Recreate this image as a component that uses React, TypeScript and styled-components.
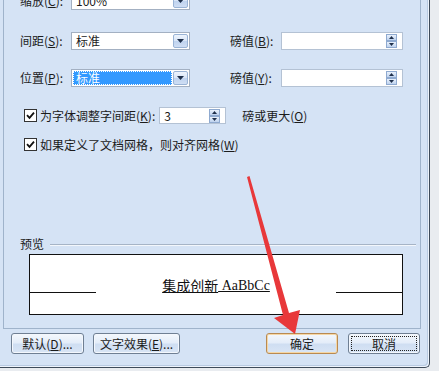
import React from 'react';
import styled, { createGlobalStyle } from 'styled-components';

const Global = createGlobalStyle`
  html, body { margin: 0; padding: 0; background: #E9ECF0; }
  body {
    font-family: "Noto Sans CJK SC", "Noto Sans", sans-serif;
    font-size: 12px;
    color: #1b1b1b;
    overflow: hidden;
  }
  u { text-underline-offset: 1px; }
`;

const Page = styled.div`
  position: relative;
  width: 439px;
  height: 371px;
  overflow: hidden;
  background: #E9ECF0;
`;

const Dialog = styled.div`
  width: 430px;
  height: 368px;
  box-sizing: border-box;
  background: #D5E3F5;
  border-right: 1px solid #3E4B5A;
  border-bottom: 1px solid #3E4B5A;
  border-bottom-right-radius: 5px;
  box-shadow: inset -1px -1px 0 #EEF4FC, inset -2px -2px 0 #B9CBE2;
  padding: 0 8px 0 3px;
  display: flex;
  flex-direction: column;
`;

const TabPanel = styled.div`
  margin-top: -40px;
  height: 369px;
  box-sizing: border-box;
  border: 1px solid #9FB3CB;
  display: flex;
  flex-direction: column;
  padding: 31px 0 13px 16px;
`;

const FormRow = styled.div<{ $top: number }>`
  display: grid;
  grid-template-columns: 51px 119px 40px 51px 122px;
  align-items: center;
  height: 18px;
  margin-top: ${p => p.$top}px;
`;

const Label = styled.span<{ $col?: number }>`
  grid-column: ${p => p.$col ?? 1};
  white-space: nowrap;
  line-height: 18px;
`;

const Combo = styled.div`
  grid-column: 2;
  height: 18px;
  box-sizing: border-box;
  border: 1px solid #A3B0C2;
  background: #fff;
  display: flex;
  align-items: stretch;
`;

const ComboText = styled.div<{ $selected?: boolean }>`
  flex: 1;
  margin: 1px;
  padding-left: 3px;
  line-height: 14px;
  background: ${p => (p.$selected ? '#3399FF' : 'transparent')};
  color: ${p => (p.$selected ? '#fff' : '#1b1b1b')};
  outline: ${p => (p.$selected ? '1px dotted #fff' : 'none')};
  outline-offset: -1px;
`;

const DropBtn = styled.div`
  width: 15px;
  margin: 1px 1px 1px 0;
  box-sizing: border-box;
  border: 1px solid #9AB4D6;
  border-radius: 2px;
  background: linear-gradient(#EEF4FD 0%, #D8E5F7 50%, #BFD3EF 51%, #CFDEF4 100%);
  display: flex;
  align-items: center;
  justify-content: center;
`;

const SpinInput = styled.div<{ $col?: number; $w?: number; $h?: number }>`
  grid-column: ${p => p.$col ?? 5};
  width: ${p => (p.$w ? `${p.$w}px` : 'auto')};
  height: ${p => p.$h ?? 18}px;
  box-sizing: border-box;
  border: 1px solid #B4C2D4;
  background: #fff;
  display: flex;
  align-items: center;
  padding: 0 5px 0 4px;
  flex-shrink: 0;
`;

const SpinValue = styled.span`
  flex: 1;
  line-height: 14px;
`;

const Spinner = styled.div`
  width: 11px;
  height: 14px;
  display: flex;
  flex-direction: column;
`;

const SpinHalf = styled.div`
  flex: 1;
  box-sizing: border-box;
  border: 1px solid #8FAAD0;
  background: linear-gradient(#E9F1FC, #BED2EE);
  display: flex;
  align-items: center;
  justify-content: center;
`;

const CheckRow = styled.div<{ $top: number }>`
  display: flex;
  align-items: center;
  height: 17px;
  margin-top: ${p => p.$top}px;
  padding-left: 4px;
  white-space: nowrap;
`;

const Box = styled.span`
  width: 13px;
  height: 13px;
  box-sizing: border-box;
  border: 1px solid #333;
  background: #fff;
  display: inline-flex;
  align-items: center;
  justify-content: center;
  margin-right: 3px;
  flex-shrink: 0;
`;

const Gap = styled.span<{ $w: number }>`
  display: inline-block;
  width: ${p => p.$w}px;
  flex-shrink: 0;
`;

const Group = styled.div`
  margin-top: auto;
  display: flex;
  flex-direction: column;
`;

const GroupHeader = styled.div`
  display: flex;
  align-items: center;
  height: 14px;
`;

const GroupLine = styled.div`
  flex: 1;
  height: 1px;
  margin: 2px 4px 0 6px;
  background: #A6B4C6;
  box-shadow: 0 1px 0 #F3F7FC;
`;

const PreviewBox = styled.div`
  margin: 4px 0 0 9px;
  width: 374px;
  height: 61px;
  box-sizing: border-box;
  border: 1px solid #111;
  background: #fff;
  display: grid;
  grid-template-columns: 66px 1fr 66px;
  align-items: start;
`;

const BaseLine = styled.div`
  height: 37px;
  border-bottom: 1px solid #111;
`;

const SampleText = styled.div`
  height: 38px;
  display: flex;
  align-items: flex-end;
  justify-content: center;
  font-family: "Liberation Serif", "Noto Sans CJK SC", serif;
  font-size: 14px;
  line-height: 15px;
  color: #111;
  text-decoration: underline;
  text-underline-offset: 1px;
  padding-bottom: 0;
  box-sizing: border-box;
`;

const CjkPart = styled.span`
  font-family: "Noto Sans CJK SC", sans-serif;
  font-size: 14px;
`;

const ButtonBar = styled.div`
  margin-top: 4px;
  height: 21px;
  display: flex;
  padding: 0 1px 0 8px;
`;

const Spacer = styled.div`
  flex: 1;
`;

const Button = styled.button<{ $w: number; $gap?: number; $default?: boolean; $focus?: boolean }>`
  width: ${p => p.$w}px;
  height: 21px;
  margin-left: ${p => p.$gap ?? 0}px;
  padding: 0;
  box-sizing: border-box;
  border: 1px solid ${p => (p.$default ? '#B98A52' : '#6F7F93')};
  border-radius: 3px;
  background: linear-gradient(#F4F8FD 0%, #E4EDF9 45%, #CFDEF2 55%, #D9E5F5 100%);
  box-shadow: inset 0 0 0 1px ${p => (p.$default ? '#F5D7A6' : '#F3F7FD')};
  font-family: "Noto Sans CJK SC", sans-serif;
  font-size: 12px;
  color: #1b1b1b;
  line-height: 17px;
  outline: ${p => (p.$focus ? '1px dotted #222' : 'none')};
  outline-offset: -4px;
`;

const Overlay = styled.svg`
  position: absolute;
  left: 0;
  top: 0;
  pointer-events: none;
`;

const DownTri = () => (
  <svg width="7" height="4" viewBox="0 0 7 4"><path d="M0 0h7L3.5 4z" fill="#1E2F4A" /></svg>
);
const UpSmall = () => (
  <svg width="5" height="3" viewBox="0 0 5 3"><path d="M0 3h5L2.5 0z" fill="#1E2F4A" /></svg>
);
const DownSmall = () => (
  <svg width="5" height="3" viewBox="0 0 5 3"><path d="M0 0h5L2.5 3z" fill="#1E2F4A" /></svg>
);
const Check = () => (
  <svg width="9" height="9" viewBox="0 0 9 9">
    <path d="M1 4.2 L3.5 6.8 L8 1.6" stroke="#111" strokeWidth="1.8" fill="none" />
  </svg>
);

const Spin = () => (
  <Spinner>
    <SpinHalf><UpSmall /></SpinHalf>
    <SpinHalf><DownSmall /></SpinHalf>
  </Spinner>
);

const ComboBox = ({ value, selected }: { value: string; selected?: boolean }) => (
  <Combo>
    <ComboText $selected={selected}>{value}</ComboText>
    <DropBtn><DownTri /></DropBtn>
  </Combo>
);

export default function App() {
  return (
    <Page>
      <Global />
      <Dialog>
        <TabPanel>
          <FormRow $top={0}>
            <Label>缩放(<u>C</u>):</Label>
            <ComboBox value="100%" />
          </FormRow>
          <FormRow $top={22}>
            <Label>间距(<u>S</u>):</Label>
            <ComboBox value="标准" />
            <Label $col={4}>磅值(<u>B</u>):</Label>
            <SpinInput><SpinValue /><Spin /></SpinInput>
          </FormRow>
          <FormRow $top={19}>
            <Label>位置(<u>P</u>):</Label>
            <ComboBox value="标准" selected />
            <Label $col={4}>磅值(<u>Y</u>):</Label>
            <SpinInput><SpinValue /><Spin /></SpinInput>
          </FormRow>
          <CheckRow $top={20}>
            <Box><Check /></Box>
            为字体调整字间距(<u>K</u>):
            <Gap $w={4} />
            <SpinInput $w={67} $h={17}><SpinValue>3</SpinValue><Spin /></SpinInput>
            <Gap $w={16} />
            磅或更大(<u>O</u>)
          </CheckRow>
          <CheckRow $top={12}>
            <Box><Check /></Box>
            如果定义了文档网格，则对齐网格(<u>W</u>)
          </CheckRow>
          <Group>
            <GroupHeader>
              预览
              <GroupLine />
            </GroupHeader>
            <PreviewBox>
              <BaseLine />
              <SampleText><CjkPart>集成创新</CjkPart>&nbsp;AaBbCc</SampleText>
              <BaseLine />
            </PreviewBox>
          </Group>
        </TabPanel>
        <ButtonBar>
          <Button $w={73}>默认(<u>D</u>)...</Button>
          <Button $w={87} $gap={9}>文字效果(<u>E</u>)...</Button>
          <Spacer />
          <Button $w={72} $default>确定</Button>
          <Button $w={72} $gap={10} $focus>取消</Button>
        </ButtonBar>
      </Dialog>
      <Overlay width="439" height="371" viewBox="0 0 439 371">
        <polygon
          points="247,177 249.5,176 289,313 300,310 295,334 274,318 283,315"
          fill="#E8383A"
        />
      </Overlay>
    </Page>
  );
}
